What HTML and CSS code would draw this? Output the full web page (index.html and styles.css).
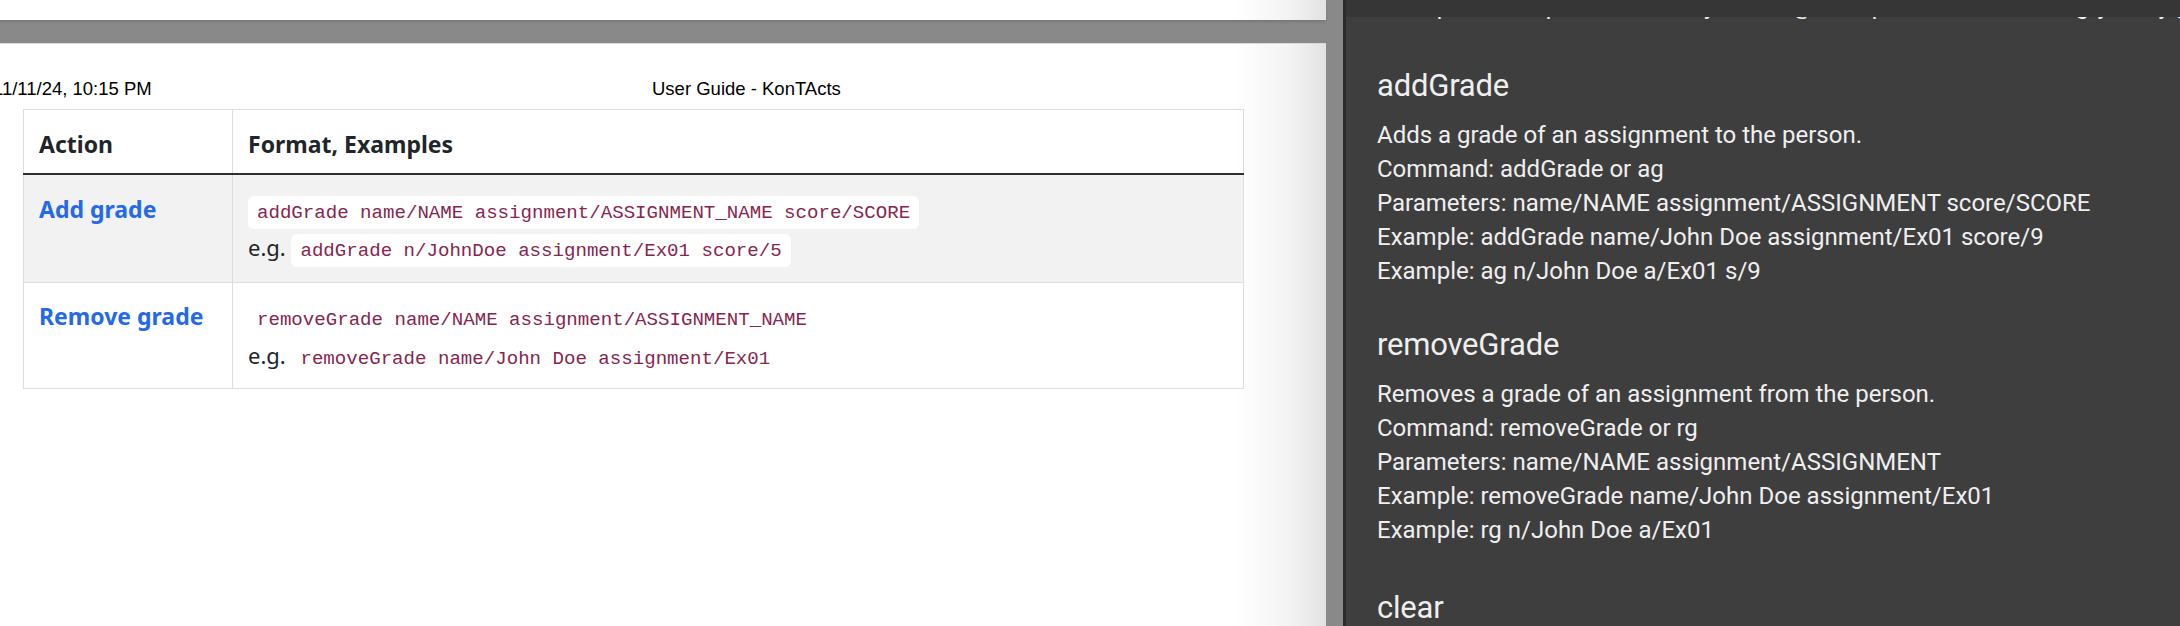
FILE: index.html
```html
<!DOCTYPE html>
<html>
<head>
<meta charset="utf-8">
<title>User Guide - KonTActs</title>
<link rel="stylesheet" href="styles.css">
</head>
<body>
<div class="screen">
  <div class="viewer">
    <div class="page page-top"></div>
    <div class="page page-main">
      <div class="print-header">
        <span class="print-date">11/11/24, 10:15 PM</span>
        <span class="print-title">User Guide - KonTActs</span>
      </div>
      <table class="cmd-table">
        <thead>
          <tr>
            <th class="col-action">Action</th>
            <th class="col-format">Format, Examples</th>
          </tr>
        </thead>
        <tbody>
          <tr class="row-odd">
            <td class="cell-action"><a class="action-link">Add grade</a></td>
            <td class="cell-format">
              <div class="line"><code class="code">addGrade name/NAME assignment/ASSIGNMENT_NAME score/SCORE</code></div>
              <div class="line">e.g. <code class="code">addGrade n/JohnDoe assignment/Ex01 score/5</code></div>
            </td>
          </tr>
          <tr class="row-even">
            <td class="cell-action"><a class="action-link">Remove grade</a></td>
            <td class="cell-format">
              <div class="line"><code class="code">removeGrade name/NAME assignment/ASSIGNMENT_NAME</code></div>
              <div class="line">e.g. <code class="code">removeGrade name/John Doe assignment/Ex01</code></div>
            </td>
          </tr>
        </tbody>
      </table>
    </div>
  </div>
  <div class="divider"></div>
  <div class="help-panel">
    <div class="help-bar"></div>
    <div class="help-scroll">
      <div class="help-content">
        <p class="help-line">Example: edit 1 p/91234567 e/johndoe@example.com t/tutorial2 g/johnny github/johndoe</p>
        <section class="help-section sec-first">
          <h2 class="help-title">addGrade</h2>
          <p class="help-line">Adds a grade of an assignment to the person.</p>
          <p class="help-line">Command: addGrade or ag</p>
          <p class="help-line">Parameters: name/NAME assignment/ASSIGNMENT score/SCORE</p>
          <p class="help-line">Example: addGrade name/John Doe assignment/Ex01 score/9</p>
          <p class="help-line">Example: ag n/John Doe a/Ex01 s/9</p>
        </section>
        <section class="help-section sec-second">
          <h2 class="help-title">removeGrade</h2>
          <p class="help-line">Removes a grade of an assignment from the person.</p>
          <p class="help-line">Command: removeGrade or rg</p>
          <p class="help-line">Parameters: name/NAME assignment/ASSIGNMENT</p>
          <p class="help-line">Example: removeGrade name/John Doe assignment/Ex01</p>
          <p class="help-line">Example: rg n/John Doe a/Ex01</p>
        </section>
        <section class="help-section sec-third">
          <h2 class="help-title">clear</h2>
        </section>
      </div>
    </div>
  </div>
</div>
</body>
</html>
```

FILE: styles.css
```css
* { box-sizing: border-box; }

html, body {
  margin: 0;
  padding: 0;
  width: 2180px;
  height: 626px;
  overflow: hidden;
}

.screen {
  display: flex;
  width: 2180px;
  height: 626px;
}

/* ---------- PDF viewer ---------- */
.viewer {
  width: 1343px;
  height: 626px;
  background: #898989;
  padding-right: 17px;
  display: flex;
  flex-direction: column;
  gap: 23px;
  overflow: hidden;
}

.page {
  width: 1326px;
  background: linear-gradient(to right, #ffffff 0, #ffffff 1235px, #f3f3f3 1290px, #e2e2e2 1326px);
}

.page-top {
  height: 20px;
  flex: none;
  box-shadow: 0 2px 2px rgba(0, 0, 0, 0.12);
}

.page-main {
  flex: 1;
  border-top: 1px solid #d9d9d9;
  padding-top: 34px;
  padding-left: 23px;
}

.print-header {
  display: grid;
  grid-template-columns: 652px auto;
  margin-left: -30px;
  height: 22px;
  font-family: "Liberation Sans", Arial, sans-serif;
  font-size: 18.5px;
  line-height: 22px;
  color: #000;
}

.print-date { white-space: nowrap; }
.print-title { white-space: nowrap; padding-left: 7px; }

/* ---------- table ---------- */
.cmd-table {
  margin-top: 9px;
  width: 1221px;
  border-collapse: collapse;
  font-family: "Noto Sans", "Open Sans", sans-serif;
  color: #212529;
  border: 1px solid #dcdde2;
}

.cmd-table th,
.cmd-table td {
  border-left: 1px solid #dcdde2;
  border-right: 1px solid #dcdde2;
  text-align: left;
  vertical-align: top;
}

.cmd-table th {
  font-size: 23px;
  font-weight: 700;
  height: 64px;
  padding: 20px 15px 0 15px;
  line-height: 28px;
  border-bottom: 2px solid #2d2f31;
}

.col-action { width: 209px; }

.row-odd { background: #f2f2f2; }
.row-odd td {
  border-bottom: 1px solid #dcdde2;
  padding: 15px 15px 16px 15px;
  line-height: 38px;
}

.row-even { background: #ffffff; }
.row-even td {
  padding: 14px 15px 13px 15px;
  line-height: 39px;
}

.cell-format { font-size: 22px; }

.action-link {
  color: #2369e8;
  font-weight: 700;
  font-size: 23px;
  text-decoration: none;
}

.line { white-space: nowrap; }

.code {
  font-family: "Liberation Mono", "DejaVu Sans Mono", monospace;
  font-size: 19.1px;
  line-height: 1;
  color: #86264f;
  background: #ffffff;
  border-radius: 6px;
  padding: 6px 9px 5px 9px;
}

/* ---------- divider ---------- */
.divider {
  width: 3px;
  background: #2b2b2b;
  flex: none;
}

/* ---------- help panel ---------- */
.help-panel {
  flex: 1;
  background: #3e3e3e;
  display: flex;
  flex-direction: column;
  overflow: hidden;
}

.help-bar {
  height: 17px;
  flex: none;
  background: #363636;
}

.help-scroll {
  flex: 1;
  overflow: hidden;
  padding-left: 31px;
}

.help-content {
  margin-top: -28px;
  font-family: Roboto, "Liberation Sans", sans-serif;
  color: #efefef;
}

.help-line {
  margin: 0;
  font-size: 24px;
  line-height: 34px;
  white-space: nowrap;
}

.sec-first { margin-top: 43px; }
.sec-second { margin-top: 37px; }
.sec-third { margin-top: 41px; }

.help-title {
  margin: 0 0 12px 0;
  font-size: 31px;
  font-weight: 400;
  line-height: 40px;
  letter-spacing: -0.2px;
}
```
